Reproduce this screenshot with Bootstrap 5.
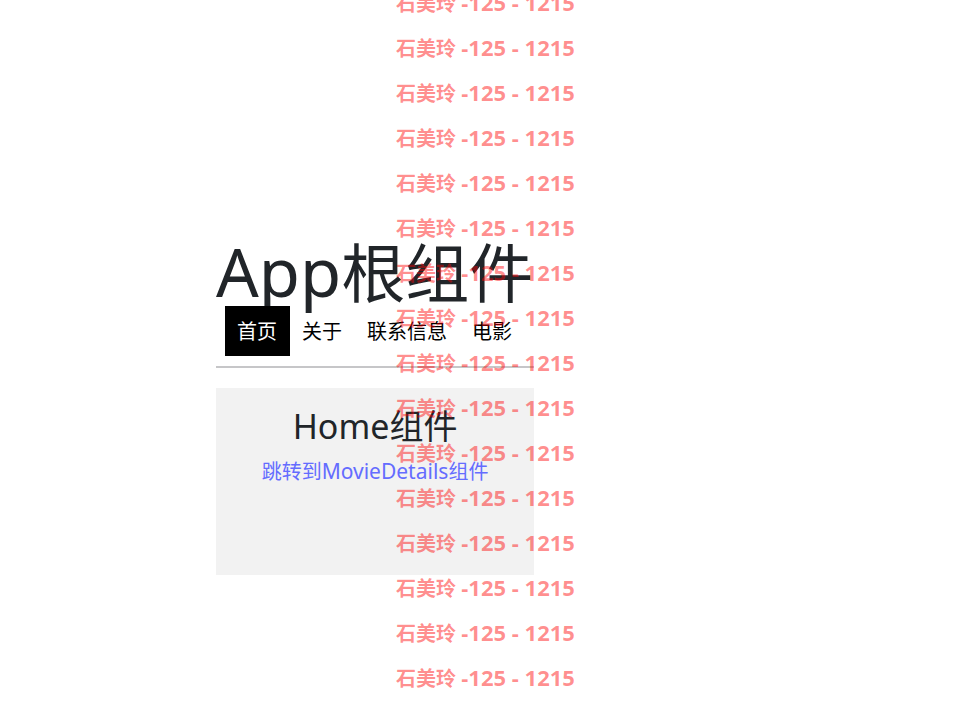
<!DOCTYPE html>
<html lang="zh-CN">
<head>
<meta charset="utf-8">
<meta name="viewport" content="width=device-width, initial-scale=1">
<title>App根组件</title>
<link href="https://cdn.jsdelivr.net/npm/bootstrap@5.3.0/dist/css/bootstrap.min.css" rel="stylesheet">
<style>
  body { font-family: "Noto Sans", "Noto Sans CJK SC", sans-serif; font-size: 20px; color: #212529; background: #fff; }
  .app-shell { padding-left: 22.25%; padding-top: 93px; }
  .app-title { font-size: 64px; line-height: 66px; font-weight: 400; }
  .app-title .latin { font-size: 67px; line-height: 1; }
  .app-tabs { border-bottom: 2px solid #c6c6c8; padding: 0 9px 10px; }
  .app-tabs .nav-link { color: #000; padding: 11px 13px 9px 12px; line-height: 30px; border-radius: 0; }
  .app-tabs .nav-link.active { color: #fff; background: #000; }
  .home-panel { background: #f2f2f2; margin-top: 20px; padding: 18px 0 88px; }
  .home-panel h2 { font-size: 34px; line-height: 40px; font-weight: 400; margin-bottom: 11px; }
  .detail-link { color: #646cff; line-height: 30px; }
  .detail-link .latin { font-size: 21px; line-height: 1; }
  .watermark { color: rgba(255, 0, 0, .45); font-size: 20px; line-height: 45px; font-weight: 700; margin-top: -19px; }
  .watermark .code { font-size: 22px; line-height: 1; }
</style>
<script src="https://cdn.jsdelivr.net/npm/bootstrap@5.3.0/dist/js/bootstrap.bundle.min.js"></script>
</head>
<body class="position-relative min-vh-100 overflow-hidden">
<main class="app-shell min-vh-100 d-flex align-items-center">
  <div>
    <h1 class="app-title mb-0 text-nowrap"><span class="latin">App</span>根组件</h1>
    <nav class="app-tabs nav flex-nowrap text-nowrap" aria-label="主导航">
      <a class="nav-link active" aria-current="page" href="#home">首页</a>
      <a class="nav-link" href="#about">关于</a>
      <a class="nav-link" href="#contact">联系信息</a>
      <a class="nav-link" href="#movie">电影</a>
    </nav>
    <section class="home-panel text-center" id="home">
      <h2>Home组件</h2>
      <a class="detail-link text-decoration-none d-inline-block" href="#details">跳转到<span class="latin">MovieDetails</span>组件</a>
    </section>
  </div>
</main>
<div class="watermark position-absolute top-0 start-0 w-100 text-center pe-none">
  <div>石美玲 <span class="code">-125 - 1215</span></div>
  <div>石美玲 <span class="code">-125 - 1215</span></div>
  <div>石美玲 <span class="code">-125 - 1215</span></div>
  <div>石美玲 <span class="code">-125 - 1215</span></div>
  <div>石美玲 <span class="code">-125 - 1215</span></div>
  <div>石美玲 <span class="code">-125 - 1215</span></div>
  <div>石美玲 <span class="code">-125 - 1215</span></div>
  <div>石美玲 <span class="code">-125 - 1215</span></div>
  <div>石美玲 <span class="code">-125 - 1215</span></div>
  <div>石美玲 <span class="code">-125 - 1215</span></div>
  <div>石美玲 <span class="code">-125 - 1215</span></div>
  <div>石美玲 <span class="code">-125 - 1215</span></div>
  <div>石美玲 <span class="code">-125 - 1215</span></div>
  <div>石美玲 <span class="code">-125 - 1215</span></div>
  <div>石美玲 <span class="code">-125 - 1215</span></div>
  <div>石美玲 <span class="code">-125 - 1215</span></div>
</div>
</body>
</html>
